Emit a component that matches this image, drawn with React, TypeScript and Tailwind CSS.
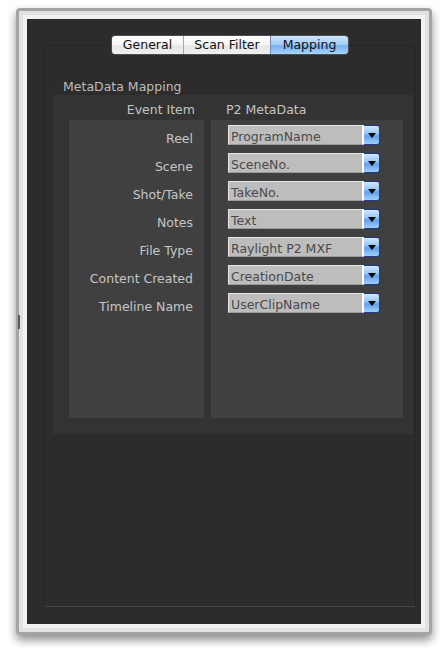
import React from "react";

const rows: [string, string][] = [
  ["Reel", "ProgramName"],
  ["Scene", "SceneNo."],
  ["Shot/Take", "TakeNo."],
  ["Notes", "Text"],
  ["File Type", "Raylight P2 MXF"],
  ["Content Created", "CreationDate"],
  ["Timeline Name", "UserClipName"],
];

function Dropdown({ value }: { value: string }) {
  return (
    <div className="flex h-[20px] w-[152px]">
      <div className="h-full w-[136px] border border-[#e6e6e6] border-b-[#9a9a9a] border-r-2 border-r-white bg-[#bdbdbd] pl-[2px] pt-[5px] text-[12.5px] leading-none text-[#4a4a4a]">
        {value}
      </div>
      <div className="flex h-full w-[16px] items-center justify-center rounded-r-[3px] border border-l-0 border-[#1d3c86] bg-[linear-gradient(to_bottom,#d0e8fd_0%,#92c3f5_45%,#5f9fec_55%,#9fd1fb_100%)]">
        <svg width="8" height="5" viewBox="0 0 8 5">
          <path d="M0 0 L8 0 L4 5 Z" fill="#000" />
        </svg>
      </div>
    </div>
  );
}

export default function App() {
  return (
    <div
      className="h-[659px] w-[448px] bg-white pl-[16px] pt-[8px]"
      style={{ fontFamily: '"DejaVu Sans", "Liberation Sans", sans-serif' }}
    >
      <div className="relative h-[627px] w-[416px] rounded-[4px] border-[3px] border-[#a4a4a4] bg-[#e2e2e2] p-[4px] shadow-[0_5px_10px_rgba(0,0,0,0.45)]">
        <div className="absolute left-[-1px] top-[304px] h-[14px] w-[2px] bg-[#5a5a5a]" />
        <div className="h-full bg-[#f2f2f2] p-[4px]">
          <div className="h-full bg-[#2c2c2c] pb-[17px] pl-[17px] pr-[5px] pt-[26px]">
            <div className="relative h-full rounded-[3px] border border-[#262626] border-b-[#474747] pl-[8px] pr-[2px] pt-[33px]">
              <div className="absolute left-1/2 top-[-11px] flex h-[20px] w-[238px] -translate-x-1/2 overflow-hidden rounded-[4px] border border-[#4d4d4d] text-[12.5px] leading-none text-[#111]">
                <div className="flex w-[72px] items-center justify-center border-r border-[#a8a8a8] bg-[linear-gradient(to_bottom,#ffffff_0%,#f4f4f4_50%,#e6e6e6_55%,#f0f0f0_100%)] pt-[1px]">
                  General
                </div>
                <div className="flex w-[87px] items-center justify-center border-r border-[#6f8fb8] bg-[linear-gradient(to_bottom,#ffffff_0%,#f4f4f4_50%,#e6e6e6_55%,#f0f0f0_100%)] pt-[1px]">
                  Scan Filter
                </div>
                <div className="flex flex-1 items-center justify-center bg-[linear-gradient(to_bottom,#cfe6fd_0%,#9fcbf6_48%,#74b0f0_54%,#a7d5fb_100%)] pt-[1px]">
                  Mapping
                </div>
              </div>
              <div className="h-[16px] pl-[10px] text-[12.5px] leading-[16px] text-[#bcbcbc]">
                MetaData Mapping
              </div>
              <div className="h-[339px] w-[360px] bg-[#333333] pl-[16px] pt-[7px]">
                <div className="flex h-[16px] text-[12.5px] leading-[16px] text-[#c4c4c4]">
                  <div className="w-[135px] pr-[9px] text-right">Event Item</div>
                  <div className="ml-[7px] pl-[15px]">P2 MetaData</div>
                </div>
                <div className="mt-[2px] flex h-[298px] gap-[7px]">
                  <div className="flex w-[135px] flex-col gap-[8px] bg-[#404040] pr-[11px] pt-[9px] text-[12.5px] text-[#c6c6c6]">
                    {rows.map(([label]) => (
                      <div key={label} className="flex h-[20px] items-center justify-end leading-none">
                        {label}
                      </div>
                    ))}
                  </div>
                  <div className="flex w-[192px] flex-col gap-[8px] bg-[#404040] pl-[17px] pt-[5px]">
                    {rows.map(([label, value]) => (
                      <Dropdown key={label} value={value} />
                    ))}
                  </div>
                </div>
              </div>
            </div>
          </div>
        </div>
      </div>
    </div>
  );
}
